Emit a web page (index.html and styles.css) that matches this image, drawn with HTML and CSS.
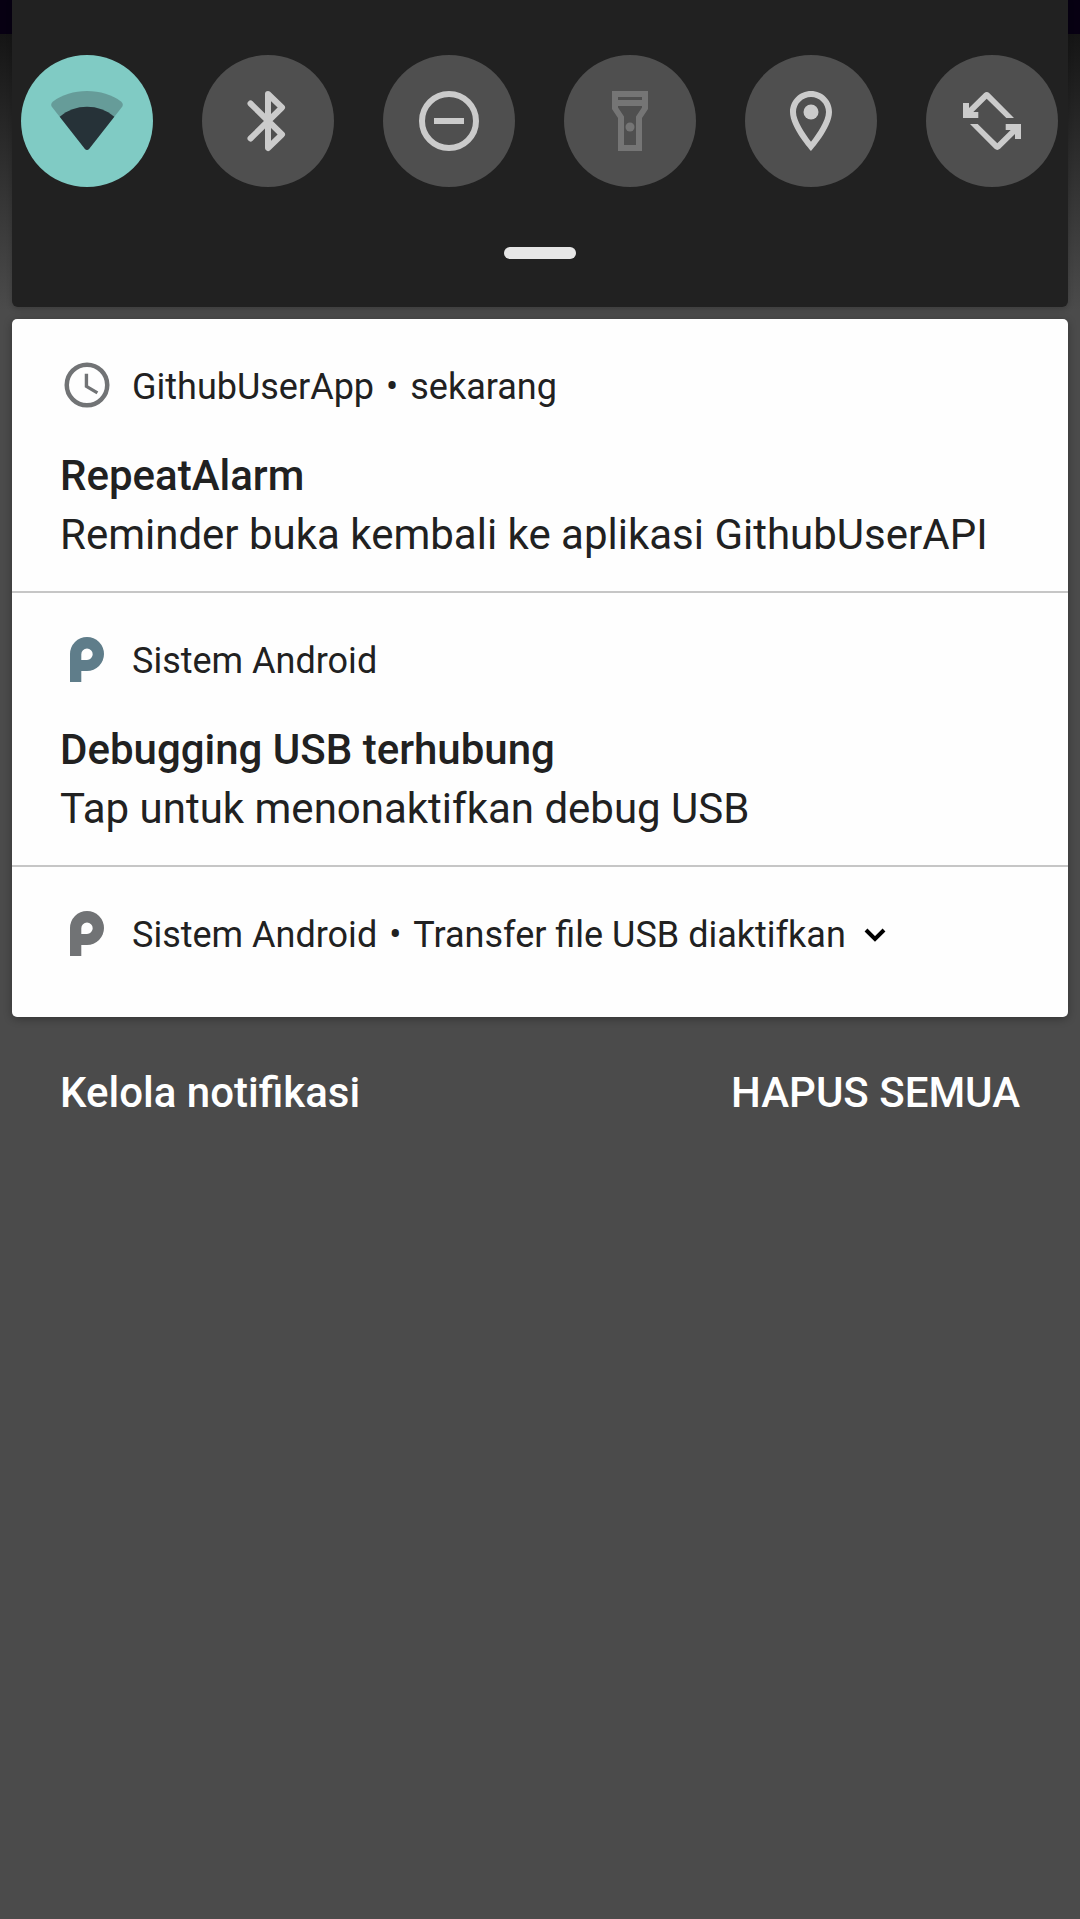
FILE: index.html
```html
<!DOCTYPE html>
<html lang="id">
<head>
<meta charset="utf-8">
<meta name="viewport" content="width=device-width, initial-scale=1">
<title>Notifikasi</title>
<link rel="stylesheet" href="styles.css">
</head>
<body>
<main class="shade">
  <section class="quick" aria-label="Setelan cepat">
    <div class="tiles">
      <button class="tile tile-on" aria-label="Wi-Fi">
        <svg viewBox="0 0 72 72"><path fill="#669c99" d="M2 16.500C11 9.800 23 6 36 6S61 9.800 70 16.500Q73 19 71 22L38 64Q36 66 34 64L1 22Q-1 19 2 16.500Z"/><path fill="#263238" d="M8.700 31.700C16.500 25 26 21.700 36 21.700S55.500 25 63.300 31.700L38 64Q36 66 34 64Z"/></svg>
      </button>
      <button class="tile" aria-label="Bluetooth">
        <svg viewBox="0 0 72 72"><path fill="none" stroke="currentColor" stroke-width="6" stroke-linecap="round" stroke-linejoin="round" d="M18.500 18.500L50 49.500L36 63V9L50 22.500L18.500 53.500"/></svg>
      </button>
      <button class="tile" aria-label="Jangan Ganggu">
        <svg viewBox="0 0 72 72"><circle cx="36" cy="36" r="27" fill="none" stroke="currentColor" stroke-width="6"/><path fill="currentColor" d="M21 33H51V39H21Z"/></svg>
      </button>
      <button class="tile tile-off" aria-label="Senter">
        <svg viewBox="0 0 72 72"><path fill="currentColor" fill-rule="evenodd" d="M18 6H54V24L48 33V66H24V33L18 24ZM24 12V15H48V12ZM24 21V22.500L30 31.500V60H42V31.500L48 22.500V21Z"/><circle cx="36" cy="42" r="4.500" fill="currentColor"/></svg>
      </button>
      <button class="tile" aria-label="Lokasi">
        <svg viewBox="0 0 24 24"><path fill="currentColor" d="M12 2C8.130 2 5 5.130 5 9c0 5.250 7 13 7 13s7-7.750 7-13c0-3.870-3.130-7-7-7zM7 9c0-2.760 2.240-5 5-5s5 2.240 5 5c0 2.880-2.880 7.190-5 9.880C9.920 16.210 7 11.850 7 9z"/><circle cx="12" cy="9" r="2.500" fill="currentColor"/></svg>
      </button>
      <button class="tile" aria-label="Putar otomatis">
        <svg viewBox="0 0 72 72"><g fill="currentColor"><path d="M7 18H13V23L28 8.200Q30.700 6 33.400 8.200L58 33H50.300L30.700 13.700L17.300 27H22.300V33H7Z"/><path transform="rotate(180 36 36)" d="M7 18H13V23L28 8.200Q30.700 6 33.400 8.200L58 33H50.300L30.700 13.700L17.300 27H22.300V33H7Z"/></g></svg>
      </button>
    </div>
    <div class="handle"></div>
  </section>

  <section class="list" aria-label="Daftar notifikasi">
    <article class="note">
      <header class="note-head">
        <svg class="note-icon" viewBox="0 0 24 24"><circle cx="12" cy="12" r="9" fill="none" stroke="#717375" stroke-width="2"/><path fill="#717375" d="M12.500 7H11v6l5.250 3.150.750-1.230-4.500-2.670z"/></svg>
        <span>GithubUserApp</span><span class="dot">•</span><span>sekarang</span>
      </header>
      <div class="note-body">
        <h2 class="note-title">RepeatAlarm</h2>
        <p class="note-text">Reminder buka kembali ke aplikasi GithubUserAPI</p>
      </div>
    </article>
    <article class="note">
      <header class="note-head">
        <svg class="note-icon icon-blue" viewBox="0 0 54 54"><path fill="currentColor" fill-rule="evenodd" d="M10 50V22A17 17 0 1 1 27 39H21.300V50ZM21.300 22.300V28H27A5.700 5.700 0 1 0 21.300 22.300Z"/></svg>
        <span>Sistem Android</span>
      </header>
      <div class="note-body">
        <h2 class="note-title">Debugging USB terhubung</h2>
        <p class="note-text">Tap untuk menonaktifkan debug USB</p>
      </div>
    </article>
    <article class="note note-small">
      <header class="note-head">
        <svg class="note-icon" viewBox="0 0 54 54"><path fill="currentColor" fill-rule="evenodd" d="M10 50V22A17 17 0 1 1 27 39H21.300V50ZM21.300 22.300V28H27A5.700 5.700 0 1 0 21.300 22.300Z"/></svg>
        <span>Sistem Android</span><span class="dot">•</span><span>Transfer file USB diaktifkan</span>
        <button class="expand" aria-label="Luaskan"><svg viewBox="0 0 24 16"><path fill="none" stroke="#000" stroke-width="4" d="M3 3L12 12L21 3"/></svg></button>
      </header>
    </article>
  </section>

  <footer class="actions">
    <button class="action">Kelola notifikasi</button>
    <button class="action">HAPUS SEMUA</button>
  </footer>
</main>
</body>
</html>
```
FILE: styles.css
```css
* {
  box-sizing: border-box;
}

body {
  margin: 0;
  min-height: 100vh;
  background: linear-gradient(#070012 0 34px, #151515 34px, #4b4b4b 310px) #4b4b4b;
  color: #212121;
  font-family: Roboto, "Noto Sans", sans-serif;
}

button {
  margin: 0;
  padding: 0;
  border: 0;
  background: none;
  color: inherit;
  font: inherit;
}

svg {
  display: block;
}

.shade {
  padding: 0 12px;
}

.quick {
  padding: 55px 10px 48px 9px;
  border-radius: 0 0 6px 6px;
  background: #212121;
  box-shadow: 0 2px 6px rgba(0, 0, 0, 0.2);
}

.tiles {
  display: flex;
  justify-content: space-between;
}

.tile {
  display: grid;
  place-items: center;
  width: 132px;
  height: 132px;
  border-radius: 50%;
  background: #4f4f4f;
  color: #cbcbcb;
}

.tile svg {
  width: 72px;
  height: 72px;
}

.tile-on {
  background: #80cbc4;
}

.tile-off {
  color: #757575;
}

.handle {
  width: 72px;
  height: 12px;
  margin: 60px auto 0;
  border-radius: 6px;
  background: #e6e6e6;
}

.list {
  margin-top: 12px;
  border-radius: 5px;
  background: #fefefe;
  box-shadow: 0 2px 8px rgba(0, 0, 0, 0.3);
}

.note {
  padding: 39px 48px 27px;
}

.note + .note {
  border-top: 2px solid #c6c6c6;
}

.note-small {
  padding-bottom: 53px;
}

.note-head {
  display: flex;
  align-items: center;
  font-size: 36px;
  line-height: 58px;
}

.note-icon {
  width: 54px;
  height: 54px;
  margin: 0 18px 4px 0;
  color: #717375;
}

.icon-blue {
  color: #5f7d8a;
}

.dot {
  margin: 0 12px;
}

.expand {
  margin-left: 17px;
}

.expand svg {
  width: 24px;
  height: 16px;
}

.note-body {
  margin-top: 30px;
  font-size: 42px;
  line-height: 59px;
}

.note-title,
.note-text {
  margin: 0;
  font-size: inherit;
}

.note-title {
  font-weight: 500;
}

.actions {
  display: flex;
  justify-content: space-between;
  padding: 46px 48px;
  color: #fff;
  font-size: 42px;
  font-weight: 500;
  line-height: 59px;
}
```
